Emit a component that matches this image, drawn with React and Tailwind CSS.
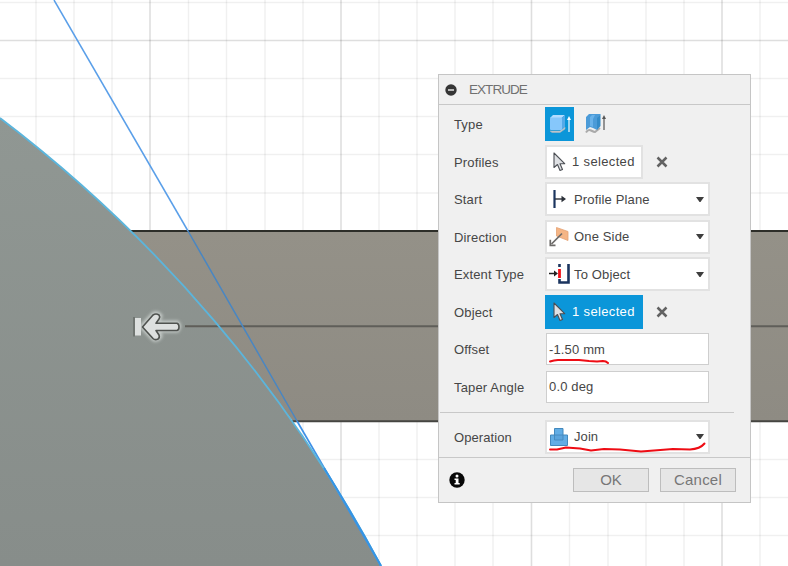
import React from "react";

const minorX = [-2, 36, 74, 112, 188.5, 226.5, 265, 303, 379, 417, 455, 493, 569.5, 608, 646, 684, 760];
const majorX = [150, 341, 531.5, 722];
const minorY = [2.5, 78.5, 116.5, 154.5, 193, 269, 307, 345, 383, 459.5, 497.5, 535.5];
const majorY = [40.5, 231, 421];

function Canvas() {
  return (
    <svg className="absolute inset-0" width="788" height="566" viewBox="0 0 788 566">
      <defs>
        <linearGradient id="disc" x1="0" y1="0" x2="0" y2="1">
          <stop offset="0" stopColor="#909793" />
          <stop offset="1" stopColor="#878d8a" />
        </linearGradient>
        <linearGradient id="bar" x1="0" y1="0" x2="0" y2="1">
          <stop offset="0" stopColor="#949188" />
          <stop offset="1" stopColor="#8e8b83" />
        </linearGradient>
        <filter id="glow" x="-50%" y="-50%" width="200%" height="200%">
          <feGaussianBlur stdDeviation="1.6" />
        </filter>
      </defs>
      <rect width="788" height="566" fill="#fff" />
      <g stroke="#000" strokeOpacity="0.06" strokeWidth="1.5">
        {minorX.map((x) => <path key={x} d={`M${x} 0V566`} />)}
        {minorY.map((y) => <path key={y} d={`M0 ${y}H788`} />)}
      </g>
      <g stroke="#000" strokeOpacity="0.13" strokeWidth="1.6">
        {majorX.map((x) => <path key={x} d={`M${x} 0V566`} />)}
        {majorY.map((y) => <path key={y} d={`M0 ${y}H788`} />)}
      </g>
      <path d="M131 231H788V421H293Z" fill="url(#bar)" />
      <path d="M131 231H788" stroke="#2d2e29" strokeWidth="2" />
      <path d="M292 421.2H788" stroke="#454541" strokeWidth="2" />
      <path d="M0 118A1370 1370 0 0 1 381 566H0Z" fill="url(#disc)" />
      <path d="M185 326.3H788" stroke="#5f5e59" strokeWidth="2" />
      <path d="M54 0L188 231" stroke="#5a9fe9" strokeWidth="1.5" />
      <path d="M188 231L297 421" stroke="#4886c3" strokeWidth="1.5" />
      <path d="M297 421L381 566" stroke="#3f91e8" strokeWidth="1.7" />
      <path d="M0 118A1370 1370 0 0 1 381 566" fill="none" stroke="#5bb5dc" strokeWidth="1.8" />
      <path d="M324 468Q352 513 381 566" fill="none" stroke="#3594e4" strokeWidth="2" />
      <path d="M142 326.5L154 314Q158 313 160 316L156 323H177Q180 326 177 330H156L160 336Q158 340 154 339Z" fill="none" stroke="#c4cac7" strokeWidth="5" filter="url(#glow)" />
      <path d="M134 317V336.5" stroke="#555855" strokeWidth="1" />
      <rect x="135" y="318" width="6" height="17.5" fill="#dde0df" />
      <path d="M142.500 327L153 315Q156 313 159 315Q160.500 317 159 319L156 323.300H177Q179 324 179 327Q179 330 177 330.500H156L159 335Q160 337.500 158 339Q155 340.500 153 338.500Z" fill="#dde0df" stroke="#4f524f" strokeWidth="1.6" strokeLinejoin="round" />
    </svg>
  );
}

function Cursor() {
  return (
    <svg className="ml-[8px] mr-[6px] shrink-0" width="13" height="20" viewBox="0 0 13 20">
      <path d="M1 1V15.500L4.500 12.500L7 18.500L9.500 17.500L7 11.700H11.700Z" fill="#dfe1e4" stroke="#4c4f55" strokeWidth="1.1" strokeLinejoin="round" />
    </svg>
  );
}

function SolidIcon() {
  return (
    <svg width="24" height="24" viewBox="0 0 24 24">
      <path d="M2 19L4 20.500H12L17 17V15L12 19Z" fill="#c5cbd0" stroke="#a5b5c0" strokeWidth=".6" />
      <path d="M2 6L5 3H17L13.500 6Z" fill="#b3dcff" />
      <path d="M13.500 6L17 3V14.500L13.500 18Z" fill="#55aae8" />
      <rect x="2" y="5.500" width="12" height="12.500" rx="1" fill="#86c7fb" />
      <path d="M21 20V6" stroke="#fff" strokeWidth="1.2" />
      <path d="M19 8L21 4L23 8Z" fill="#fff" />
    </svg>
  );
}

function ThinIcon() {
  return (
    <svg width="24" height="24" viewBox="0 0 24 24">
      <path d="M2 20.500Q4 17 7 18.500T11 20L16 16" fill="none" stroke="#aaa" strokeWidth="2" />
      <path d="M2 5L5 2H16.500L13 7V18L9 16L6 15L2 18Z" fill="#4b9bd8" />
      <path d="M6 5L8 3H11L9 7V15L6 14Z" fill="#69b2ea" />
      <path d="M13 6L16.500 2V14L13 18Z" fill="#348bc8" />
      <path d="M20 18V5" stroke="#555" strokeWidth="1.2" />
      <path d="M18 7L20 3L22 7Z" fill="#555" />
    </svg>
  );
}

function StartIcon() {
  return (
    <svg width="20" height="20" viewBox="0 0 20 20">
      <path d="M5.500 1V19" stroke="#1b355f" strokeWidth="2.200" />
      <path d="M6 10H15" stroke="#2b3038" strokeWidth="1.400" />
      <path d="M12.500 6.800L17 10L12.500 13.200Z" fill="#2b3038" />
    </svg>
  );
}

function DirectionIcon() {
  return (
    <svg width="20" height="20" viewBox="0 0 20 20">
      <path d="M7.500 .5L19 4.500V13.500L7.500 9Z" fill="#f5b585" stroke="#e5a273" strokeWidth=".8" />
      <path d="M13 6.500L2.500 17" stroke="#6d6b69" strokeWidth="1.700" />
      <path d="M1.300 12.800V18.300H6.500" fill="none" stroke="#6d6b69" strokeWidth="1.700" />
    </svg>
  );
}

function ExtentIcon() {
  return (
    <svg width="24" height="22" viewBox="0 0 24 22">
      <path d="M0 10.500H7" stroke="#222" strokeWidth="1.500" />
      <path d="M5 7.500L9 10.500L5 13.500Z" fill="#222" />
      <path d="M10.500 6V15" stroke="#f31219" strokeWidth="2.800" />
      <path d="M10.500 1V4M10.500 16V19.500H19.500V1" fill="none" stroke="#1b355f" strokeWidth="2.600" />
    </svg>
  );
}

function JoinIcon() {
  return (
    <svg width="20" height="20" viewBox="0 0 20 20">
      <path d="M5.500 1.500H14V8H18.500V18.500H1.500V8H5.500Z" fill="#62ade5" stroke="#4389bd" />
      <path d="M5.500 8V13H14V8Z" fill="#5ba4dc" stroke="#4389bd" strokeWidth=".9" />
    </svg>
  );
}

function Row({ label, children }) {
  return (
    <div className="flex h-[37.5px] items-center">
      <span className="w-[91px] shrink-0 whitespace-nowrap pt-[2px]">{label}</span>
      {children}
    </div>
  );
}

function Select({ icon, children }) {
  return (
    <div className="flex h-[34px] w-[165px] items-center border-2 border-[#e2e2e2] bg-white">
      <span className="ml-[2px] flex w-[25px] shrink-0 items-center">{icon}</span>
      <span className="grow whitespace-nowrap pt-px">{children}</span>
      <svg className="mr-[4px]" width="8" height="5" viewBox="0 0 8 5"><path d="M0 0H8L4.500 5H3.500Z" fill="#3e3e3e" /></svg>
    </div>
  );
}

function Selection({ active }) {
  return (
    <>
      <div className={active ? "flex h-[34px] w-[98px] items-center bg-[#0b96d9] text-white" : "flex h-[34px] w-[98px] items-center border-2 border-[#e2e2e2] bg-white"}>
        <span className={active ? "flex" : "-ml-[2px] flex"}><Cursor /></span>
        <span className="whitespace-nowrap pt-px tracking-[0.35px]">1 selected</span>
      </div>
      <svg className="ml-[13px]" width="12" height="12" viewBox="0 0 12 12"><path d="M1.500 1.500L10.500 10.500M10.500 1.500L1.500 10.500" stroke="#626262" strokeWidth="2.500" /></svg>
    </>
  );
}

function Input({ children }) {
  return <div className="ml-px flex h-[32px] w-[163px] items-center border border-[#cecece] bg-white pl-[2px] pt-px">{children}</div>;
}

export default function App() {
  return (
    <main className="relative h-[566px] w-[788px] overflow-hidden font-['Liberation_Sans',Arial,sans-serif] text-[13px] leading-4 text-[#464646]">
      <Canvas />
      <section className="absolute left-[438px] top-[74px] flex h-[429px] w-[313px] flex-col border border-[#c5c5c5] bg-[#f0f0f0]">
        <header className="flex h-[30px] shrink-0 items-center border-b border-[#c8c8c8] pl-[6px] text-[#707070]">
          <svg width="12" height="12" viewBox="0 0 12 12"><circle cx="6" cy="6" r="5.700" fill="#353535" /><path d="M3 6H9" stroke="#e5e5e5" strokeWidth="1.500" /></svg>
          <span className="ml-[12px] text-[13.5px] tracking-[-0.95px]">EXTRUDE</span>
        </header>
        <div className="shrink-0 pl-[15px] pt-[0.5px] tracking-[0.15px]">
          <Row label="Type">
            <div className="flex h-[34px] w-[29px] items-center justify-center bg-[#0b96d9]"><SolidIcon /></div>
            <div className="ml-[10px]"><ThinIcon /></div>
          </Row>
          <Row label="Profiles"><Selection /></Row>
          <Row label="Start"><Select icon={<StartIcon />}>Profile Plane</Select></Row>
          <Row label="Direction"><Select icon={<DirectionIcon />}>One Side</Select></Row>
          <Row label="Extent Type"><Select icon={<ExtentIcon />}>To Object</Select></Row>
          <Row label="Object"><Selection active /></Row>
          <Row label="Offset"><Input>-1.50 mm</Input></Row>
          <Row label="Taper Angle"><Input>0.0 deg</Input></Row>
        </div>
        <div className="ml-px mt-[6.5px] h-px w-[294px] shrink-0 bg-[#c8c8c8]" />
        <div className="mt-[5px] shrink-0 pl-[15px] tracking-[0.08px]">
          <Row label="Operation"><Select icon={<JoinIcon />}>Join</Select></Row>
        </div>
        <footer className="mt-[1px] flex grow items-center border-t border-[#c8c8c8] pl-[10px] text-[15px] text-[#777]">
          <svg width="16" height="16" viewBox="0 0 16 16"><circle cx="8" cy="8" r="7.700" fill="#080808" /><circle cx="8" cy="4" r="1.500" fill="#fff" /><path d="M5.500 6.500H9.500V11H10.700V12.500H5.500V11H6.700V8H5.500Z" fill="#fff" /></svg>
          <button className="ml-[108px] h-[24px] w-[76px] border border-[#bdbdbd] bg-[#e6e6e6]">OK</button>
          <button className="ml-[11px] h-[24px] w-[76px] border border-[#bdbdbd] bg-[#e6e6e6] tracking-[0.2px]">Cancel</button>
        </footer>
      </section>
      <svg className="pointer-events-none absolute inset-0" width="788" height="566" viewBox="0 0 788 566" fill="none" stroke="#ee0c14" strokeWidth="2" strokeLinecap="round" strokeLinejoin="round">
        <path d="M550 361.500Q555 359.500 560 360H579L589 361L597 361.500L603 361Q606 361 608 363" />
        <path d="M550 449.500H557L566 447.500L580 448.500L591 450.500L604 449L620 449.500L641 451.500L654 450.500L673 449L690 449.500Q700 449 704.500 443.500" />
      </svg>
    </main>
  );
}
